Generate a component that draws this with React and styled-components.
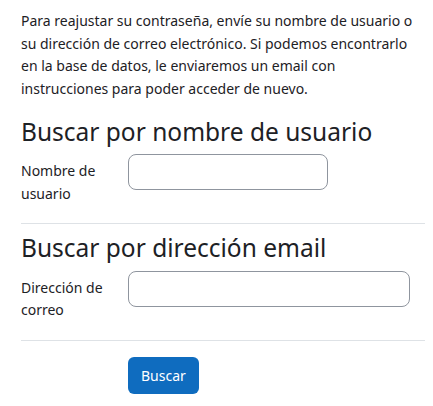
import React from 'react'
import styled, { createGlobalStyle } from 'styled-components'

const Global = createGlobalStyle`
  body {
    margin: 0;
    background: #fff;
    font-family: "Noto Sans", "Open Sans", sans-serif;
    color: #1d2125;
  }
`
const Page = styled.div`
  padding: 10px 8px 0 21px;
`
const Intro = styled.p`
  margin: 0 0 17px;
  font-size: 14px;
  line-height: 22.5px;
`
const Section = styled.div`
  padding-bottom: 18px;
  margin-bottom: 9px;
  border-bottom: 1px solid #dee2e6;
`
const Heading = styled.h3`
  margin: 0 0 8px;
  font-size: 24.5px;
  font-weight: 400;
  line-height: 1.2;
`
const Row = styled.div`
  display: flex;
  align-items: flex-start;
`
const Label = styled.label`
  width: 107px;
  flex-shrink: 0;
  font-size: 14px;
  line-height: 22.5px;
  padding-top: 6px;
`
const Input = styled.input`
  box-sizing: border-box;
  width: ${(p) => p.$w}px;
  height: 36px;
  border: 1px solid #8f959e;
  border-radius: 8px;
  font: inherit;
  padding: 6px 12px;
`
const Actions = styled.div`
  padding-top: 7px;
  padding-left: 107px;
`
const Button = styled.button`
  height: 37px;
  padding: 0 13px;
  border: none;
  border-radius: 6px;
  background: #0f6cbf;
  color: #fff;
  font-family: inherit;
  font-size: 14px;
`

export default function App() {
  return (
    <Page>
      <Global />
      <Intro>
        Para reajustar su contraseña, envíe su nombre de usuario o su dirección de correo
        electrónico. Si podemos encontrarlo en la base de datos, le enviaremos un email con
        instrucciones para poder acceder de nuevo.
      </Intro>
      <Section>
        <Heading>Buscar por nombre de usuario</Heading>
        <Row>
          <Label>Nombre de usuario</Label>
          <Input type="text" $w={200} />
        </Row>
      </Section>
      <Section>
        <Heading>Buscar por dirección email</Heading>
        <Row>
          <Label>Dirección de correo</Label>
          <Input type="text" $w={282} />
        </Row>
      </Section>
      <Actions>
        <Button>Buscar</Button>
      </Actions>
    </Page>
  )
}
